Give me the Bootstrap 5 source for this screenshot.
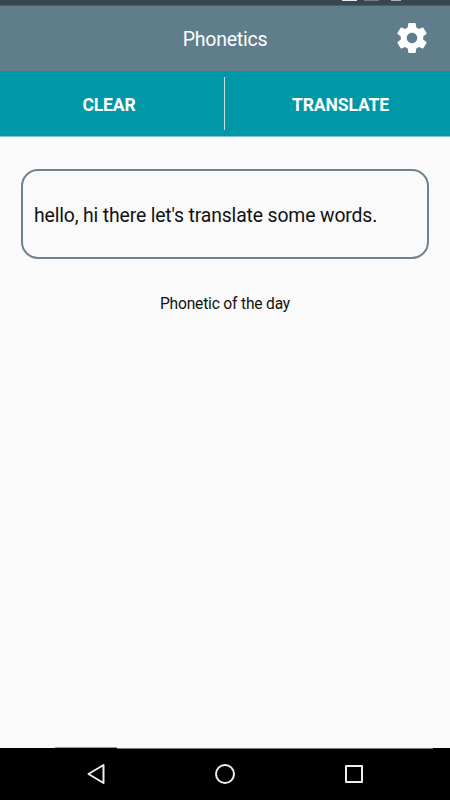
<!DOCTYPE html>
<html lang="en">
<head>
<meta charset="utf-8">
<meta name="viewport" content="width=device-width, initial-scale=1">
<title>Phonetics</title>
<link href="https://cdn.jsdelivr.net/npm/bootstrap@5.3.0/dist/css/bootstrap.min.css" rel="stylesheet">
<style>
body{font-family:Roboto,"Liberation Sans",sans-serif;background:#fafafa;color:#111;height:800px;overflow:hidden}
.status-strip{height:6px;background:#37474f;border-bottom:1px solid #4a5c66;padding-left:342px}
.status-strip span{height:1px}
.s1{width:15px;background:#e8ecee}
.s2{width:15px;background:#73808a;margin-left:7px}
.s3{width:10px;background:#aab3b8;margin-left:12px}
.app-bar{height:65px;background:#607d8b;padding:0 20px 1px 56px}
.app-title{font-size:19.5px;line-height:24px;letter-spacing:-.25px;padding-top:3px}
.gear{width:36px;height:36px}
.actions{height:66px;background:#0097a7;border-bottom:1px solid #80c8d0}
.action{font-size:17.5px;font-weight:700;line-height:24px;padding:2px 0 0;border:0;border-radius:0;letter-spacing:-.1px}
.action-clear{padding-right:6px}
.action-translate{padding-left:5px}
.divider{width:1px;height:53px;background:#c5dfe2;margin-right:1px}
.phrase{margin:32px 21px 0;height:90px;border:2px solid #6f838d;border-radius:17px;background:transparent;padding:4px 11px 0;font-size:19.4px;letter-spacing:-.15px;color:#111}
.daily{font-size:15.6px;line-height:20px;letter-spacing:-.19px;margin-top:35px}
.nav-keys{height:52px;background:#000}
.nav-edge{height:1px;background:linear-gradient(90deg,#000 117px,#777 117px,#777 433px,#000 433px)}
.page-edge{height:1px;width:62px;margin-left:55px;background:#999}
</style>
</head>
<body class="d-flex flex-column">
<div class="status-strip d-flex flex-shrink-0"><span class="s1"></span><span class="s2"></span><span class="s3"></span></div>
<header class="app-bar d-flex align-items-center flex-shrink-0 text-white">
  <div class="app-title flex-grow-1 text-center">Phonetics</div>
  <svg class="gear" viewBox="0 0 24 24" fill="#fff" role="img" aria-label="Settings"><path d="M19.43 12.98c.04-.32.07-.64.07-.98s-.03-.66-.07-.98l2.11-1.65c.19-.15.24-.42.12-.64l-2-3.46c-.12-.22-.39-.3-.61-.22l-2.49 1c-.52-.4-1.08-.73-1.69-.98l-.38-2.65C14.46 2.18 14.25 2 14 2h-4c-.25 0-.46.18-.49.42l-.38 2.65c-.61.25-1.17.59-1.69.98l-2.49-1c-.23-.09-.49 0-.61.22l-2 3.46c-.13.22-.07.49.12.64l2.11 1.65c-.04.32-.07.65-.07.98s.03.66.07.98l-2.11 1.65c-.19.15-.24.42-.12.64l2 3.46c.12.22.39.3.61.22l2.49-1c.52.4 1.08.73 1.69.98l.38 2.65c.03.24.24.42.49.42h4c.25 0 .46-.18.49-.42l.38-2.65c.61-.25 1.17-.59 1.69-.98l2.49 1c.23.09.49 0 .61-.22l2-3.46c.12-.22.07-.49-.12-.64l-2.11-1.65zM12 15.5c-1.93 0-3.5-1.57-3.5-3.5s1.57-3.5 3.5-3.5 3.5 1.57 3.5 3.5-1.57 3.5-3.5 3.5z"/></svg>
</header>
<div class="actions d-flex align-items-center flex-shrink-0">
  <button class="action action-clear btn text-white flex-fill w-50">CLEAR</button>
  <div class="divider flex-shrink-0"></div>
  <button class="action action-translate btn text-white flex-fill w-50">TRANSLATE</button>
</div>
<main class="flex-grow-1 d-flex flex-column">
  <div class="phrase d-flex align-items-center">hello, hi there let's translate some words.</div>
  <p class="daily text-center mb-0">Phonetic of the day</p>
  <div class="page-edge mt-auto"></div>
</main>
<footer class="nav-keys flex-shrink-0">
  <div class="nav-edge"></div>
  <svg class="d-block" width="450" height="51" viewBox="0 749 450 51" fill="none" stroke="#eee" stroke-width="2" stroke-linejoin="round"><path d="M103.5 765v18L88.5 774z"/><circle cx="225" cy="774" r="9"/><path d="M346 766h16v16h-16z"/></svg>
</footer>
<script src="https://cdn.jsdelivr.net/npm/bootstrap@5.3.0/dist/js/bootstrap.bundle.min.js"></script>
</body>
</html>
